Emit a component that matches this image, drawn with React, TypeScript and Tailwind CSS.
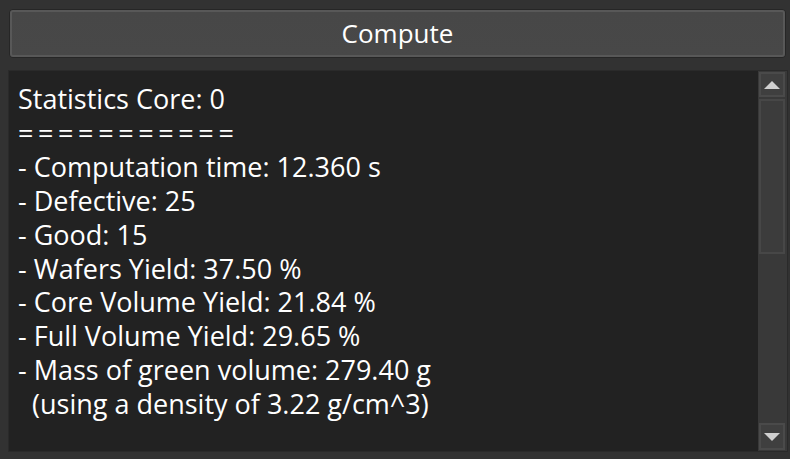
import React from 'react';

const lines = [
  'Statistics Core: 0',
  '- Computation time: 12.360 s',
  '- Defective: 25',
  '- Good: 15',
  '- Wafers Yield: 37.50 %',
  '- Core Volume Yield: 21.84 %',
  '- Full Volume Yield: 29.65 %',
  '- Mass of green volume: 279.40 g',
  '  (using a density of 3.22 g/cm^3)',
];

export default function App() {
  return (
    <div
      className="w-[790px] h-[459px] bg-[#323232] flex flex-col overflow-hidden"
      style={{ fontFamily: '"Open Sans", "Noto Sans", sans-serif' }}
    >
      {/* Compute button */}
      <div className="pt-[9px] pl-[9px] pr-[4px]">
        <button className="w-full h-[49px] rounded-[4px] border border-[#262626] p-0">
          <div className="h-full rounded-[3px] border-2 border-[#585858] bg-gradient-to-b from-[#474747] to-[#484848] flex items-center justify-center text-[26px] text-white">
            Compute
          </div>
        </button>
      </div>

      {/* Output panel */}
      <div className="mt-[12px] ml-[8px] mr-[2px] h-[382px] border border-[#2a2a2a] bg-[#222222] flex">
        <div className="flex-1 pl-[9px] pt-[11px] text-[27px] leading-[33.9px] text-white whitespace-pre">
          <div>{lines[0]}</div>
          <div className="tracking-[4.6px]">===========</div>
          {lines.slice(1).map((l, i) => (
            <div key={i}>{l}</div>
          ))}
        </div>

        {/* Scrollbar */}
        <div className="w-[29px] bg-[#393939] flex flex-col py-[1px] pl-[1px] pr-[2px]">
          <div className="h-[25px] border-2 border-[#4a4a4a] bg-[#3f3f3f] flex items-center justify-center">
            <div className="w-0 h-0 border-l-[8px] border-r-[8px] border-b-[8px] border-l-transparent border-r-transparent border-b-[#d0d0d0]" />
          </div>
          <div className="mt-[2px] h-[155px] border-2 border-[#474747] bg-[#3c3c3c]" />
          <div className="flex-1" />
          <div className="h-[27px] border-2 border-[#4a4a4a] bg-[#3f3f3f] flex items-center justify-center">
            <div className="w-0 h-0 border-l-[8px] border-r-[8px] border-t-[8px] border-l-transparent border-r-transparent border-t-[#d0d0d0]" />
          </div>
        </div>
      </div>
    </div>
  );
}
